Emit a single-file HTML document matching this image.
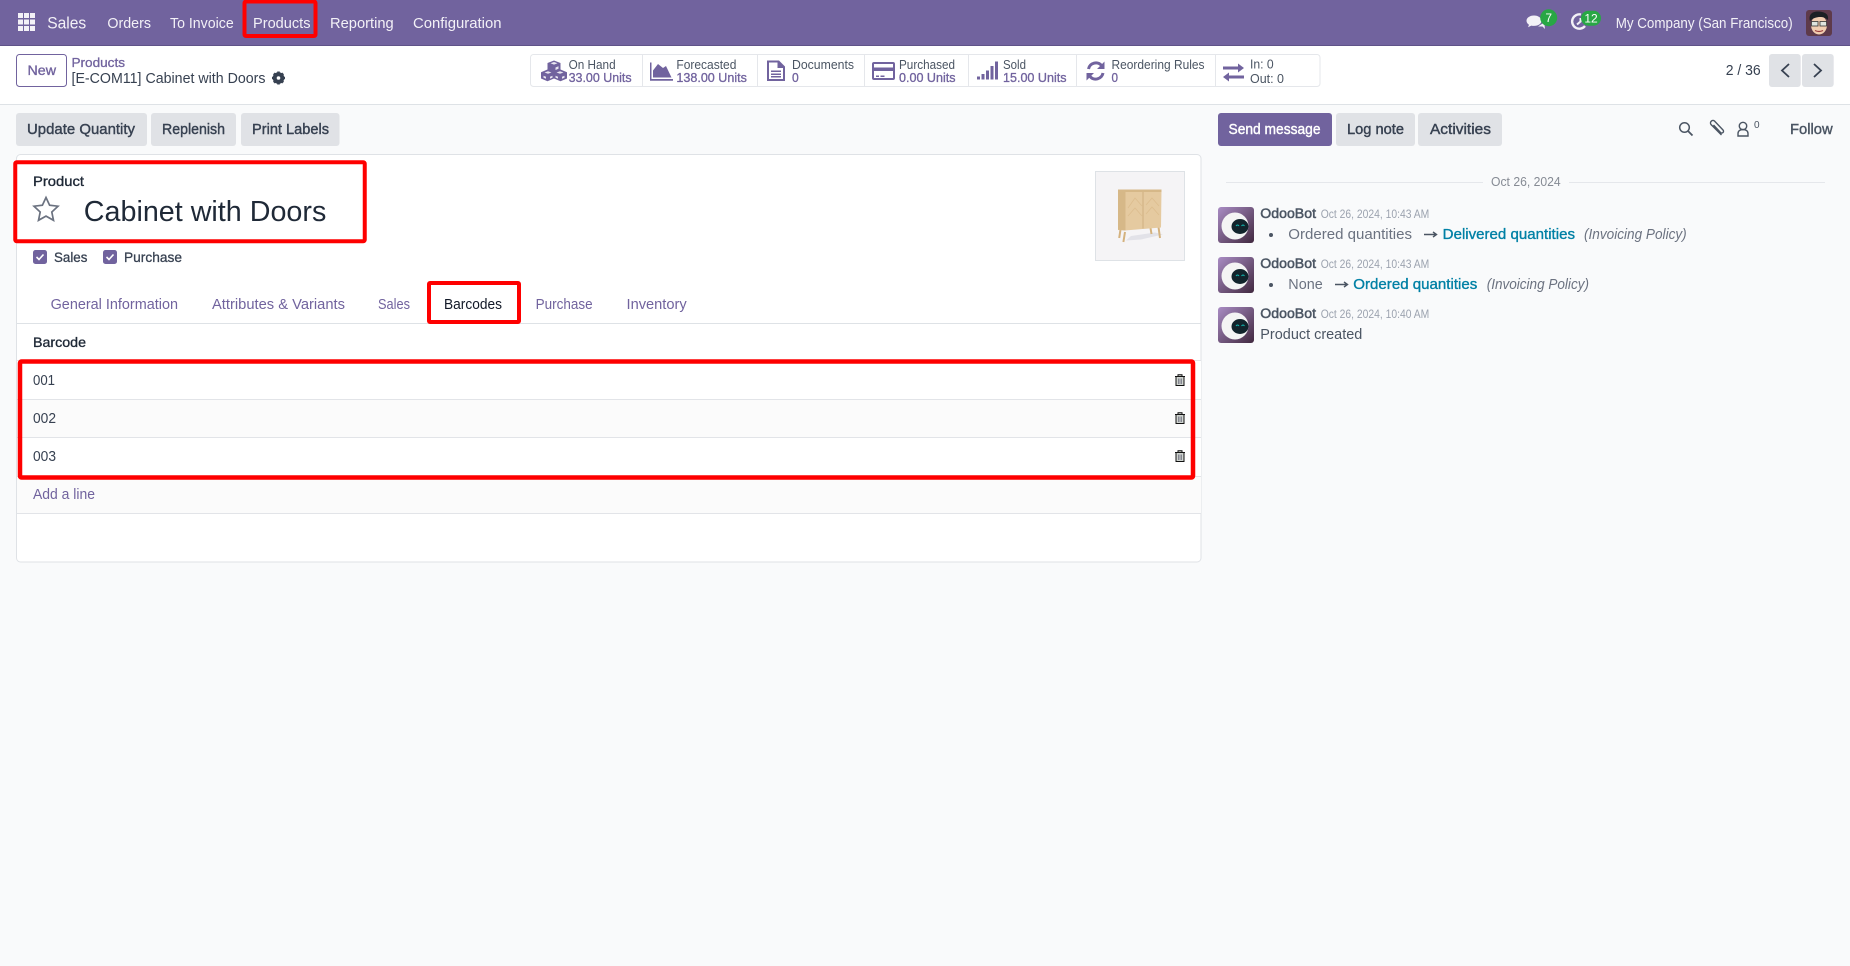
<!DOCTYPE html>
<html lang="en"><head><meta charset="utf-8"><title>Cabinet with Doors - Sales</title>
<style>
html,body{margin:0;padding:0;width:1850px;height:966px;overflow:hidden;background:#f9fafb}
svg{display:block}
text{font-family:"Liberation Sans",sans-serif;font-size:14.5px;fill:#374151;white-space:pre}
.nav{fill:#f3f1f7;font-size:15px}
.st1{font-size:12.5px;fill:#4b5563}
.st2{font-size:12.5px;fill:#71639e;stroke:#71639e;stroke-width:.3px}
.btn{font-size:14.5px;fill:#374151;stroke:#374151;stroke-width:.4px}
.med{stroke-width:.35px}
.tab{fill:#71639e;font-size:14.5px}
.name{font-size:13.5px;fill:#4b5563;stroke:#4b5563;stroke-width:.5px}
.time{font-size:11.5px;fill:#9ca3af}
.old{fill:#6b7280;font-size:15px}
.new{fill:#0180a5;stroke:#0180a5;stroke-width:.35px;font-size:15px}
.it{fill:#6b7280;font-style:italic;font-size:15px}
.ic{fill:#71639e}
.red{fill:none;stroke:#fe0000;stroke-width:4.5}
</style></head><body>
<svg width="1850" height="966" viewBox="0 0 1850 966" xmlns="http://www.w3.org/2000/svg">
<defs>
<linearGradient id="bot" x1="0" y1="0" x2="1" y2="1"><stop offset="0" stop-color="#a98cc4"/><stop offset="1" stop-color="#41283f"/></linearGradient>
<g id="botav">
<rect width="36" height="36" rx="3" fill="url(#bot)"/>
<circle cx="17" cy="19" r="13.5" fill="#f4f4f4"/>
<ellipse cx="22" cy="19.5" rx="8.5" ry="7.5" fill="#12242c"/>
<path d="M18 19q1.500-2 3 0M23.500 19q1.500-2 3 0" fill="none" stroke="#10b8b0" stroke-width="1"/>
</g>
<g id="trash"><path d="M1 2.500H11M4 2.500V.7H8V2.500M2 2.500V11.500H10V2.500" fill="#cfd4cf" stroke="#111" stroke-width="1"/><path d="M4.500 4.500V10M6 4.500V10M7.500 4.500V10" stroke="#667" stroke-width=".7"/></g>
</defs>

<!-- navbar -->
<rect width="1850" height="46" fill="#71639e"/>
<rect y="45" width="1850" height="1" fill="#5f5388"/>
<g fill="#f3f1f7">
<rect x="18" y="13" width="5" height="5"/><rect x="24" y="13" width="5" height="5"/><rect x="30" y="13" width="5" height="5"/>
<rect x="18" y="19.500" width="5" height="5"/><rect x="24" y="19.500" width="5" height="5"/><rect x="30" y="19.500" width="5" height="5"/>
<rect x="18" y="26" width="5" height="5"/><rect x="24" y="26" width="5" height="5"/><rect x="30" y="26" width="5" height="5"/>
</g>
<text class="nav" x="47.200" y="28.500" textLength="39" lengthAdjust="spacingAndGlyphs" style="font-size:17px">Sales</text>
<text class="nav" x="107.400" y="28" textLength="43.600" lengthAdjust="spacingAndGlyphs">Orders</text>
<text class="nav" x="170" y="28" textLength="63.700" lengthAdjust="spacingAndGlyphs">To Invoice</text>
<text class="nav" x="253" y="28" textLength="57.500" lengthAdjust="spacingAndGlyphs">Products</text>
<text class="nav" x="330" y="28" textLength="63.700" lengthAdjust="spacingAndGlyphs">Reporting</text>
<text class="nav" x="413" y="28" textLength="88.500" lengthAdjust="spacingAndGlyphs">Configuration</text>
<rect class="red" x="244.500" y="1.500" width="71" height="34.500" rx="1.500" style="stroke-width:4"/>

<path d="M1534 15.500c-4.500 0-7.500 2.500-7.500 5.300 0 1.700 1 3 2.500 4l-1 2.500 3.300-1.700c.9.200 1.800.300 2.700.300 4.500 0 7.500-2.300 7.500-5.100s-3-5.300-7.500-5.300z" fill="#f3f1f7"/>
<path d="M1538 26.500h4.500l2.500 2.500-.5-4-2-1.500z" fill="#f3f1f7"/>
<circle cx="1548.700" cy="17.700" r="8.500" fill="#28a745"/>
<text x="1548.700" y="22" text-anchor="middle" style="font-size:12px;fill:#fff">7</text>
<path d="M1585 26a7.200 7.200 0 1 1-4-11.500" fill="none" stroke="#f3f1f7" stroke-width="2.400"/>
<path d="M1577 24.500l3.500-3V18" fill="none" stroke="#f3f1f7" stroke-width="2"/>
<rect x="1581" y="10.700" width="20" height="15" rx="7.500" fill="#28a745"/>
<text x="1591" y="22.500" text-anchor="middle" style="font-size:12px;fill:#fff">12</text>
<text class="nav" x="1615.700" y="28" textLength="177" lengthAdjust="spacingAndGlyphs">My Company (San Francisco)</text>
<rect x="1806" y="10" width="26" height="26" rx="3" fill="#5e3a4a"/>
<ellipse cx="1819" cy="25" rx="8" ry="9.500" fill="#f2cdb0"/>
<path d="M1810 21c-2-7 3-10 9-9.500s10 2.500 9 8.500c-3-2.500-5-3-8-3s-7 1-10 4z" fill="#1c2024"/>
<rect x="1811.500" y="21.500" width="6.500" height="4.500" fill="#dfe4de" stroke="#333" stroke-width=".8"/>
<rect x="1820" y="21.500" width="6.500" height="4.500" fill="#dfe4de" stroke="#333" stroke-width=".8"/>
<path d="M1815 30.500q4 2 8 0" fill="none" stroke="#9a3c3c" stroke-width="1.200"/>

<!-- control panel -->
<rect y="46" width="1850" height="58" fill="#fff"/>
<rect y="104" width="1850" height="1" fill="#dee2e6"/>
<rect x="16.500" y="54.500" width="50" height="32" rx="3" fill="#fff" stroke="#71639e"/>
<text x="27.500" y="75" textLength="28.500" lengthAdjust="spacingAndGlyphs" style="fill:#71639e;stroke:#71639e;stroke-width:.35px;font-size:14px">New</text>
<text x="71.500" y="67" textLength="53.500" lengthAdjust="spacingAndGlyphs" style="fill:#71639e;stroke:#71639e;stroke-width:.3px;font-size:13px">Products</text>
<text x="71.500" y="83" textLength="194" lengthAdjust="spacingAndGlyphs" style="fill:#374151;font-size:14.500px">[E-COM11] Cabinet with Doors</text>
<g transform="translate(278.500 78)"><circle r="4.300" fill="none" stroke="#374151" stroke-width="3"/><path d="M-1.300-6.500h2.600v13h-2.600zM-6.500-1.300h13v2.600h-13z" fill="#374151"/><path d="M-1.300-6.500h2.600v13h-2.600zM-6.500-1.300h13v2.600h-13z" fill="#374151" transform="rotate(45)"/><circle r="1.800" fill="#fff"/></g>

<!-- stat buttons -->
<rect x="530.500" y="54.500" width="789.500" height="32" rx="3" fill="#fff" stroke="#e5e7eb"/>
<path d="M642.500 55v31M757.500 55v31M864.500 55v31M968.500 55v31M1076.500 55v31M1215.500 55v31" stroke="#e5e7eb"/>
<text class="st1" x="568.600" y="69" textLength="47" lengthAdjust="spacingAndGlyphs">On Hand</text>
<text class="st2" x="568.600" y="82" textLength="63" lengthAdjust="spacingAndGlyphs">33.00 Units</text>
<text class="st1" x="676.400" y="69" textLength="60" lengthAdjust="spacingAndGlyphs">Forecasted</text>
<text class="st2" x="676.400" y="82" textLength="70.500" lengthAdjust="spacingAndGlyphs">138.00 Units</text>
<text class="st1" x="792" y="69" textLength="62" lengthAdjust="spacingAndGlyphs">Documents</text>
<text class="st2" x="792" y="82" textLength="6.700" lengthAdjust="spacingAndGlyphs">0</text>
<text class="st1" x="899" y="69" textLength="56" lengthAdjust="spacingAndGlyphs">Purchased</text>
<text class="st2" x="899" y="82" textLength="56.500" lengthAdjust="spacingAndGlyphs">0.00 Units</text>
<text class="st1" x="1003" y="69" textLength="23" lengthAdjust="spacingAndGlyphs">Sold</text>
<text class="st2" x="1003" y="82" textLength="63.500" lengthAdjust="spacingAndGlyphs">15.00 Units</text>
<text class="st1" x="1111.500" y="69" textLength="93" lengthAdjust="spacingAndGlyphs">Reordering Rules</text>
<text class="st2" x="1111.500" y="82" textLength="6.500" lengthAdjust="spacingAndGlyphs">0</text>
<text class="st1" x="1250" y="68.500" textLength="23.700" lengthAdjust="spacingAndGlyphs">In: 0</text>
<text class="st1" x="1250" y="83" textLength="34" lengthAdjust="spacingAndGlyphs">Out: 0</text>
<!-- cubes -->
<g class="ic" fill="#71639e">
<path d="M554 60.500l6.500 2.500v6.500l6.500 2.700v6.300l-6.500 2.800-6.500-2.800-6.500 2.800-6.500-2.800v-6.300l6.500-2.700V63z"/>
<path d="M550.500 63.300l3.500 1.300 3.500-1.300-3.500-1.300zM544.500 72.500l3.500 1.300 3.500-1.300-3.500-1.300zM556.500 72.500l3.500 1.300 3.500-1.300-3.500-1.300zM555.500 67.500l3-1.200v2.500l-3 1.200zM543.500 75.800l2.500 1v2l-2.500-1zM562 76.800l2.500-1v2l-2.500 1zM555.500 75.800l2.500 1v1.800l-2.500-1zM550 76.800l2.500-1v1.800l-2.500 1z" fill="#e9e6f0"/>
<!-- area chart -->
<path d="M650 62.500h1.500V79H673v1.700h-23z"/>
<path d="M653 77.500v-7l5-6.500 5 4 3-2 5.500 11.500z"/>
<!-- doc -->
<path d="M767 60.500h12l6 6v14.500h-18zM769 62.500v16.500h14V68h-5.500v-5.500z" fill-rule="evenodd"/>
<path d="M771 70.500h10v1.500h-10zM771 73.500h10v1.500h-10zM771 76h10v1.500h-10z"/>
<!-- card -->
<path d="M874 62h19a2 2 0 0 1 2 2v14a2 2 0 0 1-2 2h-19a2 2 0 0 1-2-2V64a2 2 0 0 1 2-2zM874 64v3.500h19V64zM874 71v7h19v-7z" fill-rule="evenodd"/>
<path d="M876 75.500h3v1.500h-3zM880.500 75.500h4v1.500h-4z"/>
<!-- signal -->
<rect x="977" y="76.500" width="3" height="3"/><rect x="981.500" y="74" width="3" height="5.500"/><rect x="986" y="70.500" width="3" height="9"/><rect x="990.500" y="66" width="3" height="13.500"/><rect x="995" y="61.500" width="3" height="18"/>
</g>
<!-- refresh -->
<path d="M1088.500 69a7.500 7.500 0 0 1 13-3.500M1103 73a7.500 7.500 0 0 1-13 3.500" fill="none" stroke="#71639e" stroke-width="3"/>
<path d="M1104.500 61.500v7.500h-7.500zM1086.500 80.500V73h7.500z" fill="#71639e"/>
<!-- exchange -->
<path d="M1223 66.500h15v-3l6 4.500-6 4.500v-3h-15zM1244 75.500h-15v-3l-6 4.500 6 4.500v-3h15z" fill="#71639e"/>

<!-- pager -->
<text x="1725.700" y="75" textLength="35" lengthAdjust="spacingAndGlyphs" style="font-size:14.500px">2 / 36</text>
<rect x="1769" y="54" width="31.700" height="33" rx="3" fill="#e0e2e6"/>
<rect x="1802" y="54" width="31.700" height="33" rx="3" fill="#e0e2e6"/>
<path d="M1789 64l-7 6.500 7 6.500M1814 64l7 6.500-7 6.500" fill="none" stroke="#374151" stroke-width="1.800"/>

<!-- action buttons -->
<rect x="16" y="113" width="131" height="33" rx="3" fill="#e0e2e6"/>
<rect x="151" y="113" width="85" height="33" rx="3" fill="#e0e2e6"/>
<rect x="241" y="113" width="98.500" height="33" rx="3" fill="#e0e2e6"/>
<text class="btn" x="27" y="134" textLength="108" lengthAdjust="spacingAndGlyphs">Update Quantity</text>
<text class="btn" x="162" y="134" textLength="63" lengthAdjust="spacingAndGlyphs">Replenish</text>
<text class="btn" x="252" y="134" textLength="77" lengthAdjust="spacingAndGlyphs">Print Labels</text>
<rect x="1218" y="113" width="114" height="33" rx="3" fill="#71639e"/>
<rect x="1336" y="113" width="79" height="33" rx="3" fill="#e0e2e6"/>
<rect x="1418" y="113" width="84" height="33" rx="3" fill="#e0e2e6"/>
<text class="btn" x="1228.500" y="134" textLength="92" lengthAdjust="spacingAndGlyphs" style="fill:#fff;stroke:#fff">Send message</text>
<text class="btn" x="1347" y="134" textLength="57" lengthAdjust="spacingAndGlyphs">Log note</text>
<text class="btn" x="1430" y="134" textLength="61" lengthAdjust="spacingAndGlyphs">Activities</text>
<circle cx="1684.500" cy="127.500" r="4.800" fill="none" stroke="#4b5563" stroke-width="1.500"/>
<path d="M1688 131l4.500 4.500" stroke="#4b5563" stroke-width="1.800"/>
<path d="M1721.500 134.500l-10.500-10.500a2.500 2.500 0 0 1 3.500-3.500l8.500 9a1.700 1.700 0 0 1-2.500 2.500l-7-7.500" fill="none" stroke="#4b5563" stroke-width="1.400" transform="translate(0 .500)"/>
<circle cx="1743" cy="126" r="3.700" fill="none" stroke="#4b5563" stroke-width="1.400"/>
<path d="M1738 136v-2.500c0-2.500 2-4 5-4s5 1.500 5 4v2.500z" fill="none" stroke="#4b5563" stroke-width="1.400"/>
<text x="1754" y="128" style="font-size:10px;fill:#4b5563">0</text>
<text class="btn" x="1790" y="134" textLength="42.700" lengthAdjust="spacingAndGlyphs" style="fill:#4b5563;stroke:#4b5563">Follow</text>

<!-- sheet -->
<rect x="16.500" y="154.500" width="1184.500" height="407.500" rx="4" fill="#fff" stroke="#dfe2e6"/>
<text x="33" y="186" textLength="51" lengthAdjust="spacingAndGlyphs" style="font-size:14px;fill:#1f2937;stroke:#1f2937;stroke-width:.35px">Product</text>
<path d="M46 197.500l3.600 7.700 8.400 1-6.200 5.800 1.700 8.300-7.500-4.200-7.500 4.200 1.700-8.300-6.200-5.800 8.400-1z" fill="none" stroke="#6b7280" stroke-width="1.700"/>
<text x="83.800" y="221" textLength="242.500" lengthAdjust="spacingAndGlyphs" style="font-size:28.500px;fill:#1f2937">Cabinet with Doors</text>
<rect class="red" x="15.250" y="162.250" width="349.500" height="79" rx="1.500" style="stroke-width:4"/>

<rect x="33" y="250" width="14" height="14" rx="2.500" fill="#71639e"/>
<path d="M36.500 257l2.500 2.500 4.500-5" fill="none" stroke="#fff" stroke-width="1.600"/>
<text x="54" y="262" textLength="33.400" lengthAdjust="spacingAndGlyphs" style="font-size:14px;fill:#374151;stroke:#374151;stroke-width:.3px">Sales</text>
<rect x="103" y="250" width="14" height="14" rx="2.500" fill="#71639e"/>
<path d="M106.500 257l2.500 2.500 4.500-5" fill="none" stroke="#fff" stroke-width="1.600"/>
<text x="124" y="262" textLength="58" lengthAdjust="spacingAndGlyphs" style="font-size:14px;fill:#374151;stroke:#374151;stroke-width:.3px">Purchase</text>

<rect x="17" y="323" width="1184" height="1" fill="#dee2e6"/>
<text class="tab" x="50.600" y="309" textLength="127.400" lengthAdjust="spacingAndGlyphs">General Information</text>
<text class="tab" x="212" y="309" textLength="133" lengthAdjust="spacingAndGlyphs">Attributes &amp; Variants</text>
<text class="tab" x="378" y="309" textLength="32" lengthAdjust="spacingAndGlyphs">Sales</text>
<text class="tab" x="444" y="309" textLength="58" lengthAdjust="spacingAndGlyphs" style="fill:#111827">Barcodes</text>
<text class="tab" x="535.600" y="309" textLength="57" lengthAdjust="spacingAndGlyphs">Purchase</text>
<text class="tab" x="626.500" y="309" textLength="60.200" lengthAdjust="spacingAndGlyphs">Inventory</text>
<rect class="red" x="429" y="283" width="90" height="39" rx="1" style="stroke-width:4"/>

<text x="33" y="347" textLength="53" lengthAdjust="spacingAndGlyphs" style="font-size:14px;fill:#1f2937;stroke:#1f2937;stroke-width:.35px">Barcode</text>

<rect x="17" y="361" width="1184" height="38" fill="#fff"/>
<rect x="17" y="400" width="1184" height="37" fill="#fbfbfb"/>
<rect x="17" y="438" width="1184" height="38" fill="#fff"/>
<rect x="17" y="476" width="1184" height="37" fill="#fbfbfb"/>
<path d="M17 399.500H1201M17 437.500H1201M17 513.500H1201M17 360.500H1201M17 476.500H1201" stroke="#e2e4e8"/>
<text x="33" y="385" textLength="22" lengthAdjust="spacingAndGlyphs" style="font-size:14.500px">001</text>
<text x="33" y="423" textLength="23" lengthAdjust="spacingAndGlyphs" style="font-size:14.500px">002</text>
<text x="33" y="461" textLength="23" lengthAdjust="spacingAndGlyphs" style="font-size:14.500px">003</text>
<use href="#trash" x="1174" y="374"/><use href="#trash" x="1174" y="412"/><use href="#trash" x="1174" y="450"/>
<rect class="red" x="20" y="361.500" width="1173" height="116" rx="1.500"/>
<text x="33" y="499" textLength="62" lengthAdjust="spacingAndGlyphs" style="font-size:14.500px;fill:#71639e">Add a line</text>

<!-- product image -->
<rect x="1095.500" y="171.500" width="89" height="89" fill="#f5f4f6" stroke="#dee2e6"/>
<path d="M1131 236l24-3.500 8 2-22 5-15 1z" fill="#e2e2e8"/>
<path d="M1125 232l-1.600 10M1120.500 229.500l-1.300 8.500M1150.500 228l1 6M1158.500 227l1.500 11" stroke="#d4b27e" stroke-width="2"/>
<path d="M1118 189.500h43.500l-.5 38-36 3-7-.5z" fill="#e5caa0"/>
<path d="M1118 189.500h43.500v2.500h-36v38.500l-7.500-.8z" fill="#d6b888"/>
<path d="M1143 192v36.500" stroke="#c9a977" stroke-width=".8"/>
<path d="M1128 208l7-10 7 8M1128 216l7-8 7 8M1146 205l6-7 7 8M1146 214l6-7 7 8" fill="none" stroke="#dcbd8e" stroke-width=".8"/>

<!-- chatter -->
<path d="M1226 182.500h257M1569 182.500h256" stroke="#e5e7eb"/>
<text x="1491" y="186" textLength="69.700" lengthAdjust="spacingAndGlyphs" style="font-size:13px;fill:#868b94">Oct 26, 2024</text>

<use href="#botav" x="1218" y="207"/>
<text class="name" x="1260.300" y="218" textLength="55.700" lengthAdjust="spacingAndGlyphs">OdooBot</text>
<text class="time" x="1320.700" y="218" textLength="108.600" lengthAdjust="spacingAndGlyphs">Oct 26, 2024, 10:43 AM</text>
<circle cx="1271" cy="235" r="2" fill="#4b5563"/>
<text class="old" x="1288.300" y="239" textLength="123.700" lengthAdjust="spacingAndGlyphs">Ordered quantities</text>
<path d="M1424 234.500h12m-3-2.500l3.500 2.500-3.500 2.500" fill="none" stroke="#4b5563" stroke-width="1.400"/>
<text class="new" x="1442.700" y="239" textLength="132.300" lengthAdjust="spacingAndGlyphs">Delivered quantities</text>
<text class="it" x="1584" y="239" textLength="102.700" lengthAdjust="spacingAndGlyphs">(Invoicing Policy)</text>

<use href="#botav" x="1218" y="257"/>
<text class="name" x="1260.300" y="268" textLength="55.700" lengthAdjust="spacingAndGlyphs">OdooBot</text>
<text class="time" x="1320.700" y="268" textLength="108.600" lengthAdjust="spacingAndGlyphs">Oct 26, 2024, 10:43 AM</text>
<circle cx="1271" cy="285" r="2" fill="#4b5563"/>
<text class="old" x="1288.300" y="289" textLength="34.400" lengthAdjust="spacingAndGlyphs">None</text>
<path d="M1335 284.500h12m-3-2.500l3.500 2.500-3.500 2.500" fill="none" stroke="#4b5563" stroke-width="1.400"/>
<text class="new" x="1353.300" y="289" textLength="124" lengthAdjust="spacingAndGlyphs">Ordered quantities</text>
<text class="it" x="1486.700" y="289" textLength="102.300" lengthAdjust="spacingAndGlyphs">(Invoicing Policy)</text>

<use href="#botav" x="1218" y="307"/>
<text class="name" x="1260.300" y="318" textLength="55.700" lengthAdjust="spacingAndGlyphs">OdooBot</text>
<text class="time" x="1320.700" y="318" textLength="108.600" lengthAdjust="spacingAndGlyphs">Oct 26, 2024, 10:40 AM</text>
<text x="1260.300" y="339" textLength="102" lengthAdjust="spacingAndGlyphs" style="font-size:15px;fill:#4b5563">Product created</text>
</svg>
</body></html>
